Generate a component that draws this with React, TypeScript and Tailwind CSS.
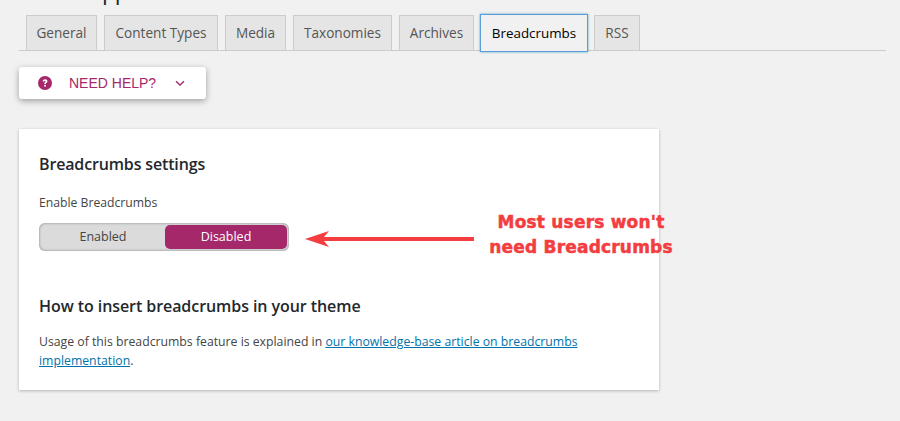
import React from 'react';

const tabs = [
  { label: 'General', width: 'w-[71px]' },
  { label: 'Content Types', width: 'w-[114px]' },
  { label: 'Media', width: 'w-[61px]' },
  { label: 'Taxonomies', width: 'w-[99px]' },
  { label: 'Archives', width: 'w-[75px]' },
  { label: 'Breadcrumbs', width: 'w-[108px]' },
  { label: 'RSS', width: 'w-[46px]' },
];

const App: React.FC = () => {
  return (
    <div className="relative h-[421px] w-[900px] overflow-hidden bg-[#f1f1f1] pl-[19px] font-['Open_Sans',sans-serif] text-[#444]">
      {/* page title, cut off by the top of the screenshot */}
      <div className="-mt-[25px] h-[40px] text-[23px] leading-[30px] tracking-[-1.3px] text-[#23282d]">Search Appearance</div>

      <div className="flex h-[36px] w-[867px] gap-[7px] border-b border-[#ccc] pl-[7px]">
        {tabs.map((tab) =>
          tab.label === 'Breadcrumbs' ? (
            <div
              key={tab.label}
              className={`-mt-px -mr-px -ml-px flex h-[38px] shrink-0 items-center justify-center border border-[#5b9dd9] bg-[#f1f1f1] text-[13.4px] font-medium text-black shadow-[0_0_2px_rgba(30,140,190,0.8)] ${tab.width}`}
            >
              {tab.label}
            </div>
          ) : (
            <div
              key={tab.label}
              className={`flex h-[35px] shrink-0 items-center justify-center border border-b-0 border-[#ccc] bg-[#e5e5e5] text-[13.6px] font-medium text-[#555] ${tab.width}`}
            >
              {tab.label}
            </div>
          ),
        )}
      </div>

      <div className="mt-[16px] flex h-[32px] w-[187px] items-center rounded-[3px] bg-white pl-[19px] text-[#a4286a] shadow-[0_2px_6px_rgba(0,0,0,0.35)]">
        <svg width="14" height="14" viewBox="0 0 14 14">
          <circle cx="7" cy="7" r="7" fill="#a4286a" />
          <path d="M4.6 5.4C4.8 4 5.8 3.2 7.1 3.2C8.5 3.2 9.5 4 9.5 5.2C9.5 6.6 7.9 6.7 7.9 8H6.2C6.2 6.2 7.6 6.2 7.6 5.3C7.6 4.9 7.4 4.7 7 4.7C6.6 4.7 6.3 5 6.2 5.6Z" fill="white" />
          <rect x="6.2" y="8.9" width="1.7" height="1.7" fill="white" />
        </svg>
        <span className="ml-[17px] font-['Liberation_Sans',sans-serif] text-[14px]">NEED HELP?</span>
        <svg className="ml-[19px]" width="10" height="7" viewBox="0 0 10 7" fill="none" stroke="#a4286a" strokeWidth="1.4">
          <path d="M1 1.2L5 5L9 1.2" />
        </svg>
      </div>

      <div className="mt-[30px] h-[261px] w-[640px] bg-white px-[20px] pt-[24px] shadow-[0_1px_3px_rgba(0,0,0,0.25)]">
        <h2 className="text-[16px] leading-[22px] font-semibold tracking-[-0.15px] text-[#23282d]">Breadcrumbs settings</h2>
        <div className="mt-[19px] text-[12.2px] leading-[18px]">Enable Breadcrumbs</div>

        <div className="mt-[11px] flex h-[28px] w-[250px] rounded-[6px] bg-[#dbdbdb] p-[2px] text-[12.5px] shadow-[inset_0_0_3px_rgba(0,0,0,0.4)]">
          <div className="flex w-[124px] items-center justify-center">Enabled</div>
          <div className="flex flex-1 items-center justify-center rounded-[5px] bg-[#a4286a] text-white">Disabled</div>
        </div>

        <h2 className="mt-[44px] text-[16px] leading-[22px] font-semibold tracking-[-0.07px] text-[#23282d]">How to insert breadcrumbs in your theme</h2>
        <p className="mt-[15px] w-[600px] text-[12.25px] leading-[19px]">
          Usage of this breadcrumbs feature is explained in{' '}
          <a className="text-[#0073aa] underline">our knowledge-base article on breadcrumbs implementation</a>.
        </p>
      </div>

      {/* annotation drawn over the card */}
      <svg className="absolute top-[229px] left-[303px]" width="172" height="20" viewBox="0 0 172 20">
        <path d="M2 10L26 2L21 8H171V12H21L26 18Z" fill="#f33d40" />
      </svg>
      <div className="absolute top-[210px] left-[470px] w-[222px] text-center font-['DejaVu_Sans',sans-serif] text-[17px] leading-[25px] font-bold tracking-[0.2px] text-[#f33d40] [-webkit-text-stroke:0.5px_#f33d40]">
        Most users won't
        <br />
        need Breadcrumbs
      </div>
    </div>
  );
};

export default App;
